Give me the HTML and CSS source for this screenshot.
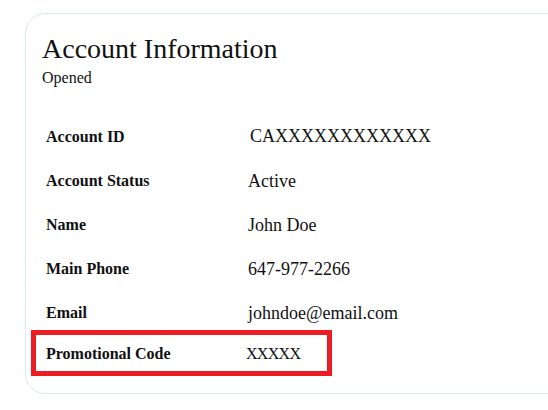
FILE: index.html
```html
<!DOCTYPE html>
<html lang="en">
<head>
<meta charset="utf-8">
<title>Account Information</title>
<link rel="stylesheet" href="styles.css">
</head>
<body>
<section class="card">
  <h1 class="title">Account Information</h1>
  <p class="status">Opened</p>
  <div class="fields">
    <div class="row"><span class="label">Account ID</span><span class="value value-id">CAXXXXXXXXXXXX</span></div>
    <div class="row"><span class="label">Account Status</span><span class="value">Active</span></div>
    <div class="row"><span class="label">Name</span><span class="value">John Doe</span></div>
    <div class="row"><span class="label">Main Phone</span><span class="value">647-977-2266</span></div>
    <div class="row"><span class="label">Email</span><span class="value">johndoe@email.com</span></div>
    <div class="row row-highlight"><span class="label">Promotional Code</span><span class="value value-code">XXXXX</span></div>
  </div>
</section>
</body>
</html>
```

FILE: styles.css
```css
html, body {
  margin: 0;
  padding: 0;
  background: #ffffff;
  overflow: hidden;
}

body {
  font-family: "Liberation Serif", "Times New Roman", serif;
  color: #111111;
}

.card {
  margin: 13px 0 0 25px;
  width: 580px;
  border: 1px solid #dbe8ef;
  border-radius: 20px;
  padding: 19px 16px 22px 16px;
  box-sizing: border-box;
}

.title {
  margin: 0;
  font-size: 28px;
  font-weight: normal;
  line-height: 32px;
}

.status {
  margin: 4px 0 0 0;
  font-size: 16px;
  line-height: 18px;
}

.fields {
  margin-top: 28px;
  display: flex;
  flex-direction: column;
}

.row {
  display: grid;
  grid-template-columns: 202px 1fr;
  align-items: center;
  height: 44px;
  padding-left: 4px;
}

.label {
  font-weight: bold;
  font-size: 16px;
}

.value {
  font-size: 18px;
}

.value-id {
  padding-left: 2px;
  margin-top: -2px;
}

.value-code {
  font-size: 16px;
  letter-spacing: -0.7px;
}

.row-highlight {
  height: 36px;
  width: 291px;
  box-sizing: border-box;
  margin-left: -6px;
  padding-left: 10px;
  padding-top: 2px;
  grid-template-columns: 200px 1fr;
  outline: 5px solid #ec1c24;
}
```
